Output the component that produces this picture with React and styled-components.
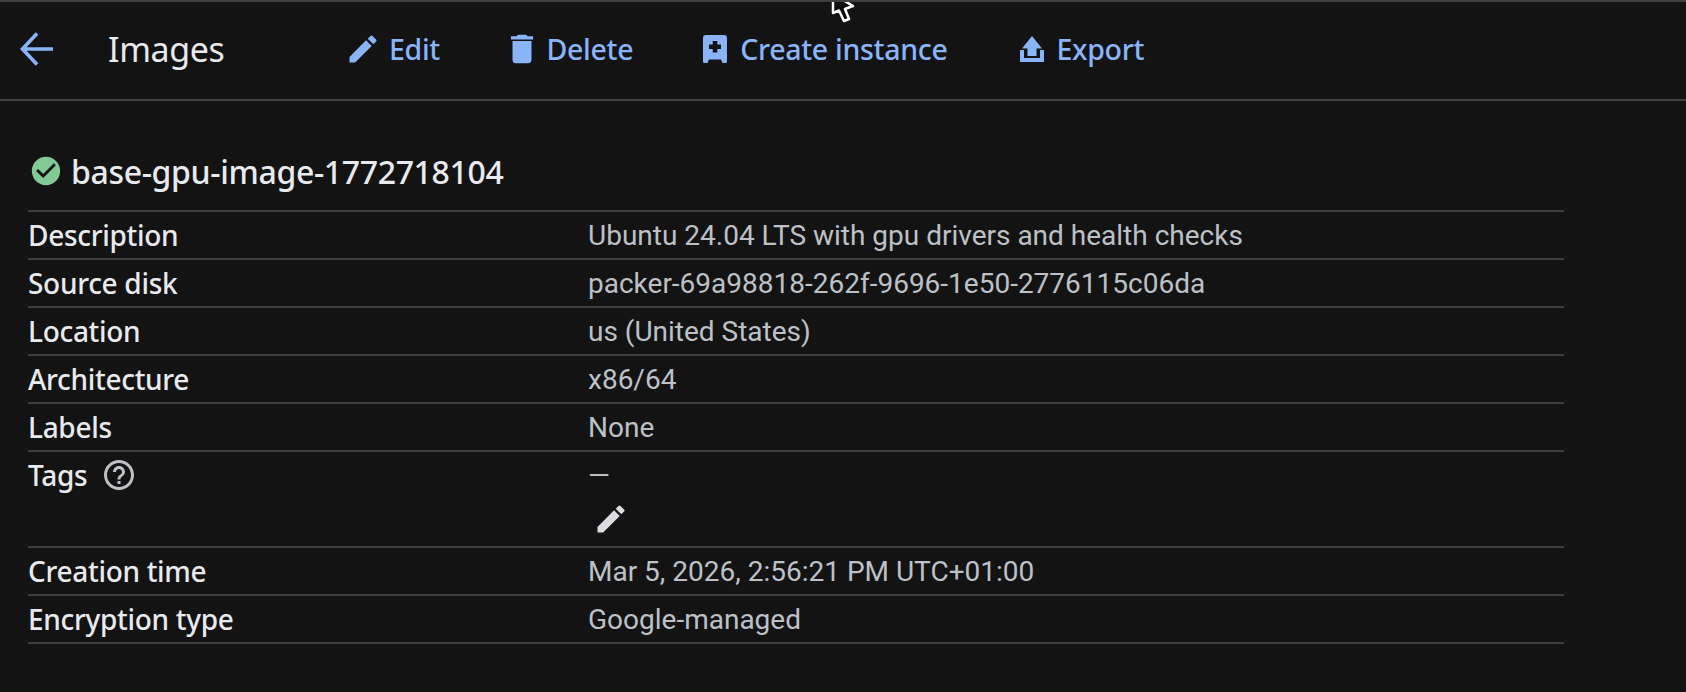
import React from "react";
import styled, { createGlobalStyle } from "styled-components";
import { MdEdit, MdDelete, MdCheckCircle, MdHelpOutline } from "react-icons/md";

const GlobalStyle = createGlobalStyle`
    html, body {
        margin: 0;
        background: #131314;
        font-family: "Roboto", "Liberation Sans", sans-serif;
    }
`;

const Page = styled.div`
    position: relative;
    width: 1686px;
    height: 692px;
    overflow: hidden;
    background: #131314;
    border-top: 2px solid #3c4043;
    box-sizing: border-box;
`;

const Toolbar = styled.div`
    display: flex;
    align-items: center;
    height: 99px;
    border-bottom: 2px solid #3c4043;
    padding-left: 20px;
    padding-bottom: 4px;
    box-sizing: border-box;
`;

const BackButton = styled.div`
    display: flex;
    width: 88px;
`;

const PageTitle = styled.h1`
    margin: 0;
    width: 237px;
    font: 400 34px "Noto Sans", sans-serif;
    letter-spacing: -0.4px;
    color: #e8eaed;
`;

const Action = styled.div`
    display: flex;
    align-items: center;
    gap: ${(props) => props.gap}px;
    margin-right: ${(props) => props.space}px;
    color: #8ab4f8;
    font: 500 28.5px "Noto Sans", sans-serif;
    letter-spacing: -0.3px;
    svg { flex: none; }
`;

const Content = styled.div`
    padding: 34px 122px 0 28px;
`;

const Heading = styled.div`
    display: flex;
    align-items: center;
    gap: 8px;
    height: 72px;
    margin-left: 2px;
    padding-bottom: 3px;
    color: #e8eaed;
    font: 500 32px "Noto Sans", sans-serif;
    letter-spacing: -0.35px;
`;

const StatusIcon = styled.span`
    display: flex;
    color: #81c995;
    font-size: 34px;
    margin-left: -1px;
`;

const Rows = styled.div`
    border-top: 2px solid #3c4043;
`;

const Row = styled.div`
    display: grid;
    grid-template-columns: 560px 1fr;
    height: ${(props) => props.height || 46}px;
    border-bottom: 2px solid #3c4043;
    line-height: 46px;
`;

const Label = styled.div`
    display: flex;
    align-items: center;
    height: 46px;
    gap: 14px;
    color: #e8eaed;
    font: 500 28px "Noto Sans", sans-serif;
    letter-spacing: -0.3px;
`;

const Value = styled.div`
    padding-top: 1px;
    color: #bdc1c6;
    font-size: 28px;
`;

const EditTags = styled.div`
    display: flex;
    color: #dadce0;
    font-size: 36px;
    margin: 2px 0 0 5px;
`;

const HelpIcon = styled.span`
    display: flex;
    color: #bdc1c6;
    font-size: 36px;
`;

const Cursor = styled.svg`
    position: absolute;
    left: 830px;
    top: -8px;
`;

const BackArrow = () => (
    <svg width="33" height="34" viewBox="0 0 33 34" fill="none" stroke="#8ab4f8" strokeWidth="3.6">
        <path d="M33 17H3M17 1.500 2.500 17 17 32.500" />
    </svg>
);

// no icon in the packages looks like these two
const CreateIcon = () => (
    <svg width="24" height="28" viewBox="0 0 24 28" fill="#8ab4f8">
        <path d="M3 0h18a3 3 0 0 1 3 3v23.500a1.500 1.500 0 0 1-1.500 1.500h-3L18 24.500H6L4.500 28h-3A1.500 1.500 0 0 1 0 26.500V3a3 3 0 0 1 3-3z" />
        <path fill="#131314" d="M9.700 6h4.600v3.400h3.700V14h-3.700v3.400H9.700V14H6V9.400h3.700z" />
    </svg>
);

const ExportIcon = () => (
    <svg width="24" height="26" viewBox="0 0 24 26" fill="#8ab4f8">
        <path d="M12 0l10 12.500h-5.500V20h-9v-7.500H2z" />
        <path d="M0 14h4v8h16v-8h4v12H0z" />
    </svg>
);

const rows = [
    ["Description", "Ubuntu 24.04 LTS with gpu drivers and health checks"],
    ["Source disk", "packer-69a98818-262f-9696-1e50-2776115c06da"],
    ["Location", "us (United States)"],
    ["Architecture", "x86/64"],
    ["Labels", "None"],
];

const App = () => {
    return (
        <Page>
            <GlobalStyle />
            <Toolbar>
                <BackButton><BackArrow /></BackButton>
                <PageTitle>Images</PageTitle>
                <Action space={63.5} gap={8}><MdEdit size={36} />Edit</Action>
                <Action space={70} gap={5}><MdDelete size={38} />Delete</Action>
                <Action space={72} gap={13}><CreateIcon />Create instance</Action>
                <Action space={0} gap={13}><ExportIcon />Export</Action>
            </Toolbar>
            <Content>
                <Heading>
                    <StatusIcon><MdCheckCircle /></StatusIcon>
                    base-gpu-image-1772718104
                </Heading>
                <Rows>
                    {rows.map(([name, text]) => (
                        <Row key={name}>
                            <Label>{name}</Label>
                            <Value>{text}</Value>
                        </Row>
                    ))}
                    <Row height={94}>
                        <Label>Tags <HelpIcon><MdHelpOutline /></HelpIcon></Label>
                        <Value>
                            —
                            <EditTags><MdEdit /></EditTags>
                        </Value>
                    </Row>
                    <Row>
                        <Label>Creation time</Label>
                        <Value>Mar 5, 2026, 2:56:21 PM UTC+01:00</Value>
                    </Row>
                    <Row>
                        <Label>Encryption type</Label>
                        <Value>Google-managed</Value>
                    </Row>
                </Rows>
            </Content>
            <Cursor width="26" height="32" viewBox="0 0 26 32">
                <path d="M3 0v19l6-2.500L14 27l5-2-4-10 8-3z" fill="#0a0a0a" stroke="#fff" strokeWidth="2.5" strokeLinejoin="round" />
            </Cursor>
        </Page>
    );
};

export default App;
